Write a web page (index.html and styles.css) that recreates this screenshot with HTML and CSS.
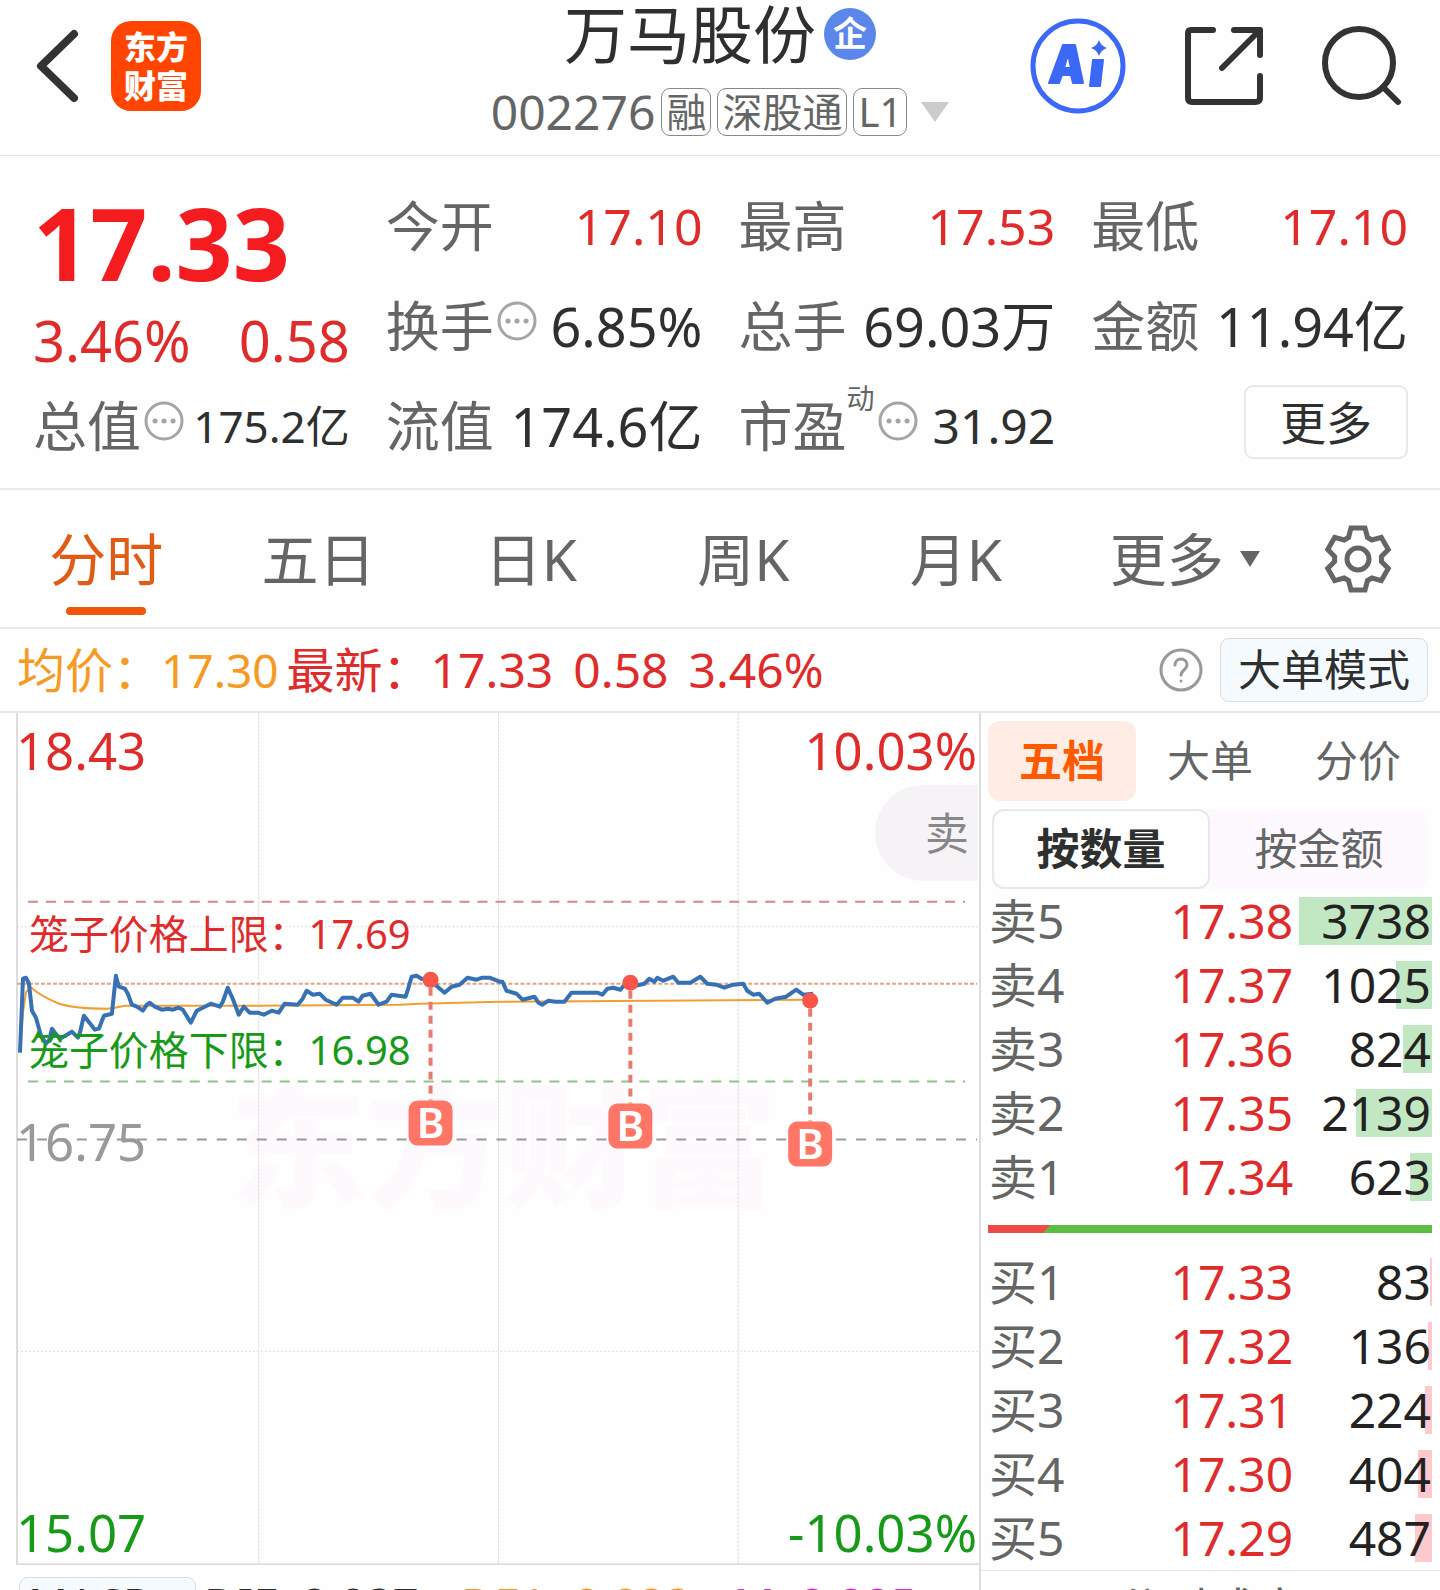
FILE: index.html
```html
<!DOCTYPE html>
<html lang="zh-CN">
<head>
<meta charset="utf-8">
<meta name="viewport" content="width=device-width, initial-scale=1">
<title>万马股份 002276</title>
<link rel="stylesheet" href="styles.css">
</head>
<body>
<div class="app">
  <header class="header">
    <div class="header-left">
      <button class="icon-btn" aria-label="返回">
        <svg width="46" height="74" viewBox="0 0 46 74" fill="none" stroke="#333" stroke-width="8" stroke-linecap="round" stroke-linejoin="round"><path d="M40 5 7 37l33 32"/></svg>
      </button>
      <div class="logo"><span>东方</span><span>财富</span></div>
    </div>
    <div class="stock">
      <h1 class="stock-name">万马股份<span class="badge">企</span></h1>
      <div class="stock-meta">
        <span class="code">002276</span>
        <span class="tag">融</span>
        <span class="tag">深股通</span>
        <span class="tag">L1</span>
        <svg class="caret" width="28" height="20" viewBox="0 0 28 20" fill="#ccc"><path d="M0 0h28L14 20z"/></svg>
      </div>
    </div>
    <div class="header-right">
      <button class="icon-btn" aria-label="AI">
        <svg width="96" height="96" viewBox="0 0 96 96"><circle cx="48" cy="48" r="45" fill="none" stroke="#3c68f8" stroke-width="5"/><path fill="#3c68f8" fill-rule="evenodd" stroke="#3c68f8" stroke-width="2" stroke-linejoin="round" d="M33 27H45L53 65H43L41 57H32L29 65H19zM38 36 34 50H41zM63 42H73L70 68H60z"/><path fill="#3c68f8" d="M69 22q2 6 8 8-6 2-8 8-2-6-8-8 6-2 8-8z"/></svg>
      </button>
      <button class="icon-btn" aria-label="分享">
        <svg width="78" height="78" viewBox="0 0 78 78" fill="none" stroke="#333" stroke-width="6" stroke-linecap="round" stroke-linejoin="round"><path d="M28 3H6Q3 3 3 6V71Q3 75 7 75H70Q75 75 75 71V49M49 3H75V28M75 3 37 41"/></svg>
      </button>
      <button class="icon-btn" aria-label="搜索">
        <svg width="80" height="80" viewBox="0 0 80 80" fill="none" stroke="#333" stroke-width="6" stroke-linecap="round"><circle cx="37" cy="37" r="34"/><path d="M61 61 76 76"/></svg>
      </button>
    </div>
  </header>

  <section class="quote">
    <div class="quote-main">
      <div class="price">17.33</div>
      <div class="change"><span>3.46%</span><span>0.58</span></div>
    </div>
    <div class="cell"><span class="label">今开</span><span class="value up">17.10</span></div>
    <div class="cell"><span class="label">最高</span><span class="value up">17.53</span></div>
    <div class="cell"><span class="label">最低</span><span class="value up">17.10</span></div>
    <div class="cell"><span class="label">换手</span><svg class="dots" viewBox="0 0 40 40"><circle cx="20" cy="20" r="18"/><path d="M11 20h.1M20 20h.1M29 20h.1"/></svg><span class="value">6.85%</span></div>
    <div class="cell"><span class="label">总手</span><span class="value">69.03万</span></div>
    <div class="cell"><span class="label">金额</span><span class="value">11.94亿</span></div>
    <div class="cell"><span class="label">总值</span><svg class="dots" viewBox="0 0 40 40"><circle cx="20" cy="20" r="18"/><path d="M11 20h.1M20 20h.1M29 20h.1"/></svg><span class="value compact">175.2亿</span></div>
    <div class="cell"><span class="label">流值</span><span class="value">174.6亿</span></div>
    <div class="cell"><span class="label">市盈</span><span class="sup">动</span><svg class="dots" viewBox="0 0 40 40"><circle cx="20" cy="20" r="18"/><path d="M11 20h.1M20 20h.1M29 20h.1"/></svg><span class="value medium">31.92</span></div>
    <div class="cell"><button class="more-btn">更多</button></div>
  </section>

  <nav class="periods">
    <button class="period active">分时</button>
    <button class="period">五日</button>
    <button class="period">日K</button>
    <button class="period">周K</button>
    <button class="period">月K</button>
    <button class="period period-more">更多<svg width="20" height="16" viewBox="0 0 20 16" fill="#646665"><path d="M0 0h20L10 16z"/></svg></button>
    <button class="period period-settings" aria-label="设置">
      <svg width="70" height="70" viewBox="-35 -35 70 70" fill="none" stroke="#646665" stroke-width="5"><path d="M-7-31H7L9.500-21.500 13.900-19 23.300-21.600 30.300-9.400 23.400-2.500V2.500L30.300 9.400 23.300 21.600 13.900 19 9.500 21.500 7 31H-7L-9.500 21.500-13.900 19-23.300 21.600-30.300 9.400-23.400 2.500V-2.500L-30.300-9.400-23.300-21.600-13.900-19-9.500-21.500z"/><circle r="11"/></svg>
    </button>
  </nav>

  <div class="summary">
    <span class="avg">均价：<b>17.30</b></span>
    <span class="latest">最新：<b>17.33</b><b>0.58</b><b>3.46%</b></span>
    <button class="icon-btn help" aria-label="帮助">
      <svg width="46" height="46" viewBox="0 0 46 46" fill="none" stroke="#999" stroke-width="3" stroke-linecap="round"><circle cx="23" cy="23" r="20"/><path d="M17 18c0-8 12-8 12 0 0 5-6 5-6 10M23 34v.1"/></svg>
    </button>
    <button class="mode-btn">大单模式</button>
  </div>

  <main class="board">
    <section class="chart-col">
      <svg class="chart" viewBox="0 0 980 853" role="img" aria-label="分时走势">
        <text class="watermark" x="504" y="484" text-anchor="middle">东方财富</text>
        <g class="grid">
          <path d="M259 0V851M499 0V851M739 0V851" stroke-dasharray="3 1"/>
          <path d="M17 214H979M17 639H979" stroke-dasharray="2 2"/>
        </g>
        <path class="frame" d="M17 0V852H980"/>
        <path d="M979 72H924a48 48 0 0 0 0 96H979z" fill="#f6f3f7"/>
        <text class="sell" x="926" y="137">卖</text>
        <path d="M28 189H966" stroke="#cf8a86" stroke-width="2" stroke-dasharray="10 8"/>
        <path d="M28 369H966" stroke="#8cc48c" stroke-width="2" stroke-dasharray="10 8"/>
        <path d="M17 427H978" stroke="#999" stroke-width="2" stroke-dasharray="10 10"/>
        <path d="M17 271H978" stroke="#e2a385" stroke-width="2" stroke-dasharray="4 2"/>
        <path class="avg-line" d="M20 338 23 300 26 280 30 274Q42 284 57 290T107 296L115 295 125 293 247 293 400 292 420 291 500 289 811 287"/>
        <polyline class="price-line" points="20,340 23,266 26,265 29,271 32,298 36,305 41,323 46,331 49,328 52,316 55,320 60,326 67,322 72,319 78,325 80,320 84,303 88,308 95,317 99,316 104,303 112,301 116,263 119,274 125,276 128,281 132,292 137,294 143,298 147,292 150,290 155,294 162,297 168,296 173,297 179,295 183,297 191,310 197,298 203,295 211,291 220,294 223,289 228,275 233,286 239,302 244,294 250,300 258,300 264,302 272,298 279,300 285,291 298,292 303,286 307,278 313,282 320,281 326,287 337,292 343,285 353,285 359,289 363,283 371,281 379,292 387,289 392,282 406,284 408,278 412,264 417,263 422,266 431,267 438,274 445,280 452,274 460,272 468,265 477,267 483,265 490,265 500,269 503,269 507,278 517,281 523,287 535,284 539,290 543,292 549,288 556,289 565,289 572,280 598,280 603,282 608,276 614,275 621,277 626,271 631,268 636,273 645,271 650,266 655,269 658,265 664,268 674,264 679,270 691,270 701,264 708,271 717,272 725,275 734,272 744,271 748,278 754,282 760,281 768,290 776,286 787,284 797,277 804,282 814,281"/>
        <g class="axis">
          <text class="up" x="16" y="57">18.43</text>
          <text class="up" x="978" y="57" text-anchor="end">10.03%</text>
          <text class="flat" x="16" y="448">16.75</text>
          <text class="down" x="16" y="840">15.07</text>
          <text class="down" x="978" y="840" text-anchor="end">-10.03%</text>
        </g>
        <g class="cage">
          <text class="up" x="29" y="236">笼子价格上限：17.69</text>
          <text class="down" x="29" y="352">笼子价格下限：16.98</text>
        </g>
        <g class="marker">
          <path d="M431 275V388"/><circle cx="431" cy="267" r="8"/><rect x="409" y="388" width="44" height="45" rx="9"/><text x="431" y="425">B</text>
          <path d="M631 278V391"/><circle cx="631" cy="270" r="8"/><rect x="609" y="391" width="44" height="45" rx="9"/><text x="631" y="428">B</text>
          <path d="M811 296V409"/><circle cx="811" cy="288" r="8"/><rect x="789" y="409" width="44" height="45" rx="9"/><text x="811" y="446">B</text>
        </g>
      </svg>
      <div class="indicators">
        <button class="ind-btn">MACD</button>
        <span>DIF: 0.027<small>↑</small></span>
        <span class="dea">DEA: 0.022<small>↑</small></span>
        <span class="macd">M: 0.005<small>↑</small></span>
      </div>
    </section>

    <aside class="book">
      <div class="book-tabs">
        <button class="book-tab active">五档</button>
        <button class="book-tab">大单</button>
        <button class="book-tab">分价</button>
      </div>
      <div class="segment">
        <button class="seg active">按数量</button>
        <button class="seg">按金额</button>
      </div>
      <table class="levels asks">
        <tr><th scope="row">卖5</th><td>17.38</td><td class="vol"><i style="width:133px"></i><span>3738</span></td></tr>
        <tr><th scope="row">卖4</th><td>17.37</td><td class="vol"><i style="width:36px"></i><span>1025</span></td></tr>
        <tr><th scope="row">卖3</th><td>17.36</td><td class="vol"><i style="width:29px"></i><span>824</span></td></tr>
        <tr><th scope="row">卖2</th><td>17.35</td><td class="vol"><i style="width:76px"></i><span>2139</span></td></tr>
        <tr><th scope="row">卖1</th><td>17.34</td><td class="vol"><i style="width:22px"></i><span>623</span></td></tr>
      </table>
      <div class="ratio"><div class="ratio-buy" style="width:14%"></div></div>
      <table class="levels bids">
        <tr><th scope="row">买1</th><td>17.33</td><td class="vol"><i style="width:2px"></i><span>83</span></td></tr>
        <tr><th scope="row">买2</th><td>17.32</td><td class="vol"><i style="width:4px"></i><span>136</span></td></tr>
        <tr><th scope="row">买3</th><td>17.31</td><td class="vol"><i style="width:7px"></i><span>224</span></td></tr>
        <tr><th scope="row">买4</th><td>17.30</td><td class="vol"><i style="width:14px"></i><span>404</span></td></tr>
        <tr><th scope="row">买5</th><td>17.29</td><td class="vol"><i style="width:17px"></i><span>487</span></td></tr>
      </table>
      <div class="trades">分时成交</div>
    </aside>
  </main>
</div>
</body>
</html>
```
FILE: styles.css
```css
* { box-sizing: border-box; }

body {
  margin: 0;
  background: #fefefe;
  color: #2e2f2f;
  font-family: "Noto Sans", "Noto Sans CJK SC", sans-serif;
}

button {
  margin: 0;
  padding: 0;
  border: 0;
  background: none;
  color: inherit;
  font: inherit;
}

svg { display: block; flex: none; }

.app { height: 100vh; overflow: hidden; }

.up { color: #e02b2b; fill: #e02b2b; }
.down { fill: #179a17; }
.flat { fill: #999; }

/* Header */
.header {
  display: grid;
  grid-template-columns: 1fr auto 1fr;
  height: 156px;
  border-bottom: 1px solid #e0e0e0;
}
.header-left, .header-right { display: flex; align-items: center; height: 132px; }
.header-left { gap: 31px; padding-left: 34px; }
.header-right { justify-content: flex-end; gap: 59px; padding-right: 38px; }
.logo {
  display: flex;
  flex-direction: column;
  align-items: center;
  justify-content: center;
  width: 90px;
  height: 90px;
  border-radius: 20px;
  background: #ff4500;
  color: #fff;
  font-size: 32px;
  font-weight: 900;
  line-height: 39px;
}
.stock { display: flex; flex-direction: column; align-items: center; gap: 20px; }
.stock-name {
  display: flex;
  align-items: center;
  gap: 8px;
  margin: 0;
  font-size: 63px;
  font-weight: 400;
  line-height: 68px;
}
.badge {
  width: 52px;
  height: 52px;
  border-radius: 50%;
  background: #5b87ea;
  color: #fff;
  font-size: 34px;
  font-weight: 700;
  line-height: 50px;
  text-align: center;
}
.stock-meta { display: flex; align-items: center; gap: 6px; color: #646665; }
.code { font-size: 48px; line-height: 48px; }
.tag {
  padding: 0 4px;
  border: 1px solid #888;
  border-radius: 9px;
  font-size: 40px;
  line-height: 46px;
}
.caret { margin-left: 8px; }

/* Quote */
.quote {
  display: grid;
  grid-template-columns: repeat(4, 1fr);
  grid-auto-rows: 100px;
  column-gap: 36px;
  padding: 20px 32px 12px 33px;
  border-bottom: 2px solid #e8e8e8;
}
.quote-main {
  grid-row: span 2;
  display: flex;
  flex-direction: column;
  gap: 8px;
  padding-top: 12px;
}
.price { color: #f51c20; font-size: 100px; font-weight: 700; line-height: 108px; }
.change {
  display: flex;
  justify-content: space-between;
  color: #e02b2b;
  font-size: 56px;
  line-height: 72px;
}
.cell { display: flex; align-items: center; white-space: nowrap; }
.label { color: #646665; font-size: 54px; line-height: 72px; }
.value { margin-left: auto; font-size: 54px; line-height: 72px; }
.value.up { font-size: 50px; }
.value.medium { font-size: 48px; }
.value.compact { font-size: 44px; }
.sup { align-self: flex-start; margin-top: 4px; color: #646665; font-size: 28px; line-height: 36px; }
.dots {
  width: 40px;
  height: 40px;
  margin: 0 0 10px 3px;
  fill: none;
  stroke: #a5a5a5;
  stroke-width: 3;
}
.dots path { stroke-width: 5; stroke-linecap: round; }
.more-btn {
  width: 164px;
  height: 74px;
  margin: 0 0 8px auto;
  border: 2px solid #e8e8e8;
  border-radius: 9px;
  font-size: 46px;
  line-height: 68px;
}

/* Period tabs */
.periods {
  display: grid;
  grid-template-columns: repeat(6, 213fr) 162fr;
  height: 139px;
  padding-right: 4px;
  border-bottom: 2px solid #e8e8e8;
}
.period {
  position: relative;
  display: flex;
  align-items: center;
  justify-content: center;
  gap: 16px;
  color: #646665;
  font-size: 57px;
  line-height: 80px;
}
.period.active { color: #e05c14; }
.period.active::after {
  content: "";
  position: absolute;
  bottom: 12px;
  width: 80px;
  height: 8px;
  border-radius: 4px;
  background: #f05508;
}
.period-more { padding-left: 33px; }
.period-settings { padding-left: 6px; }

/* Summary line */
.summary {
  display: flex;
  align-items: center;
  height: 84px;
  padding: 0 12px 0 17px;
  border-bottom: 2px solid #e8e8e8;
  font-size: 48px;
  line-height: 64px;
  white-space: nowrap;
}
.summary b { font-weight: 400; }
.avg { margin-right: 8px; color: #f59a23; }
.avg b { font-size: 46px; }
.latest { display: flex; color: #e02b2b; }
.latest b + b { margin-left: 20px; }
.help { margin: 0 16px 0 auto; }
.mode-btn {
  width: 208px;
  height: 64px;
  border: 1px solid #d8dde2;
  border-radius: 9px;
  background: #f5faff;
  font-size: 43px;
  line-height: 60px;
}

/* Chart */
.board { display: grid; grid-template-columns: minmax(0, 979fr) minmax(0, 461fr); }
.chart { width: 100%; height: auto; fill: none; }
.grid path { stroke: #ddd; stroke-width: 1; }
.frame { stroke: #ddd; stroke-width: 2; }
.watermark { fill: #fdf9fd; font-size: 137px; font-weight: 900; }
.sell { fill: #888; font-size: 44px; }
.avg-line { stroke: #f0a030; stroke-width: 2; }
.price-line { stroke: #3670b5; stroke-width: 4; stroke-linejoin: round; }
.axis { font-size: 51px; }
.cage { font-size: 40px; }
.marker path { stroke: #e67c70; stroke-width: 4; stroke-dasharray: 8 6; }
.marker circle { fill: #f95548; }
.marker rect { fill: #ff7566; }
.marker text { fill: #fff; font-size: 42px; font-weight: 600; text-anchor: middle; }

.indicators {
  display: grid;
  grid-template-columns: 177px 256fr 261fr 257fr;
  padding: 12px 0 0 19px;
  overflow: hidden;
  font-size: 46px;
  line-height: 54px;
  white-space: nowrap;
}
.indicators span { padding-left: 8px; }
.indicators small { font-size: 34px; }
.ind-btn {
  height: 60px;
  padding: 0 32px 8px 0;
  border: 1px solid #d8dde2;
  border-radius: 9px;
  background: #f5faff;
  font-size: 44px;
  line-height: 50px;
}
.dea { color: #f59a23; }
.macd { color: #d030d0; }

/* Order book */
.book { border-left: 2px solid #ddd; }
.book-tabs {
  display: grid;
  grid-template-columns: repeat(3, 1fr);
  padding: 8px 8px 0 7px;
}
.book-tab {
  height: 80px;
  border-radius: 12px;
  color: #646665;
  font-size: 43px;
  line-height: 80px;
}
.book-tab.active { background: #ffede5; color: #ff5a00; font-weight: 700; }
.segment {
  display: grid;
  grid-template-columns: 1fr 1fr;
  margin: 8px 12px 0 11px;
  border-radius: 12px;
  background: #fdf9fe;
}
.seg {
  height: 80px;
  border: 2px solid transparent;
  border-radius: 12px;
  color: #646665;
  font-size: 43px;
  line-height: 76px;
}
.seg.active { border-color: #e8e8e8; background: #fefefe; color: #2e2f2f; font-weight: 700; }
.levels {
  width: 100%;
  border-collapse: collapse;
  table-layout: fixed;
  font-size: 48px;
  line-height: 64px;
}
.levels th, .levels td { height: 64px; padding: 0; text-align: right; font-weight: 400; }
.levels th { width: 30%; padding-left: 8px; color: #646665; text-align: left; }
.levels td { color: #e02b2b; }
.levels .vol { position: relative; width: 32%; padding-right: 9px; color: #222; }
.vol i { position: absolute; top: 8px; right: 8px; height: 48px; background: #c1e8c3; }
.bids .vol i { background: #fdc9cc; }
.vol span { position: relative; }
.ratio { height: 8px; margin: 16px 8px 17px 7px; background: #5bbd42; }
.ratio-buy { height: 8px; background: #f04a45; clip-path: polygon(0 0, 100% 0, calc(100% - 7px) 100%, 0 100%); }
.trades {
  border-top: 1px solid #e8e8e8;
  color: #646665;
  font-size: 47px;
  line-height: 76px;
  text-align: center;
}
```
